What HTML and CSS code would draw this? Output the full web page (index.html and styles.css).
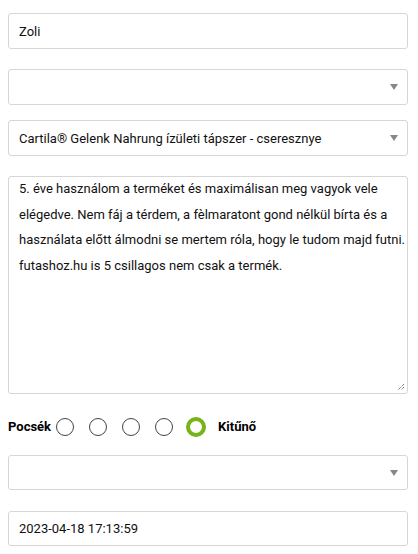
FILE: index.html
```html
<!DOCTYPE html>
<html lang="hu">
<head>
<meta charset="utf-8">
<link rel="stylesheet" href="styles.css">
</head>
<body>
<form class="form">
  <div class="field f-name">Zoli</div>
  <div class="field select f-sel1"><span class="ph"></span><span class="arrow"></span></div>
  <div class="field select f-sel2"><span>Cartila® Gelenk Nahrung ízületi tápszer - cseresznye</span><span class="arrow"></span></div>
  <div class="field area"><div class="area-text">5. éve használom a terméket és maximálisan meg vagyok vele<br>elégedve. Nem fáj a térdem, a fèlmaratont gond nélkül bírta és a<br>használata előtt álmodni se mertem róla, hogy le tudom majd futni.<br>futashoz.hu is 5 csillagos nem csak a termék.</div><svg class="grip" width="9" height="9" viewBox="0 0 9 9"><path d="M8 2 L2 8 M8 5 L5 8" stroke="#444" stroke-width="1" stroke-dasharray="1 1"/></svg></div>
  <div class="rating">
    <span class="lbl">Pocsék</span>
    <span class="radios">
      <span class="radio"></span>
      <span class="radio"></span>
      <span class="radio"></span>
      <span class="radio"></span>
      <span class="radio on"></span>
    </span>
    <span class="lbl">Kitűnő</span>
  </div>
  <div class="field select f-sel3"><span class="ph"></span><span class="arrow"></span></div>
  <div class="field date">2023-04-18 17:13:59</div>
</form>
</body>
</html>
```
FILE: styles.css
```css
* { box-sizing: border-box; }
html, body { margin: 0; background: #fff; }
body {
  font-family: Roboto, "Noto Sans", Arial, sans-serif;
  font-size: 13px;
  color: #111;
}
.form {
  display: flex;
  flex-direction: column;
  padding: 13px 10px 0 8px;
  width: 418px;
}
.field {
  height: 36px;
  border: 1px solid #d6d6d6;
  border-radius: 3px;
  padding: 0 10px;
  display: flex;
  align-items: center;
  color: #111;
  background: #fff;
  flex-shrink: 0;
}
.f-name { margin-bottom: 20px; }
.f-sel1 { margin-bottom: 15px; }
.f-sel2 { margin-bottom: 20px; }
.select { justify-content: space-between; padding-right: 9px; }
.arrow {
  width: 0; height: 0;
  border-left: 4px solid transparent;
  border-right: 4px solid transparent;
  border-top: 6px solid #888;
}
.area {
  display: block;
  position: relative;
  height: 218px;
  padding: 0 4px 0 10px;
  line-height: 25.7px;
}
.area-text { margin-top: -1px; white-space: nowrap; }
.grip { position: absolute; right: 2px; bottom: 2px; }
.rating {
  height: 61px;
  padding-top: 4px;
  display: flex;
  align-items: center;
  gap: 5px;
}
.lbl { font-weight: bold; color: #000; }
.radios { display: flex; align-items: center; gap: 15px; margin-right: 7px; }
.radio {
  width: 18px; height: 18px;
  border: 1px solid #444;
  border-radius: 50%;
}
.radio.on {
  width: 20px; height: 20px;
  border: 4.5px solid #78b31a;
  margin-left: -2px;
}
.f-sel3 { margin-bottom: 21px; height: 35px; }
.date { height: 35px; }
```
